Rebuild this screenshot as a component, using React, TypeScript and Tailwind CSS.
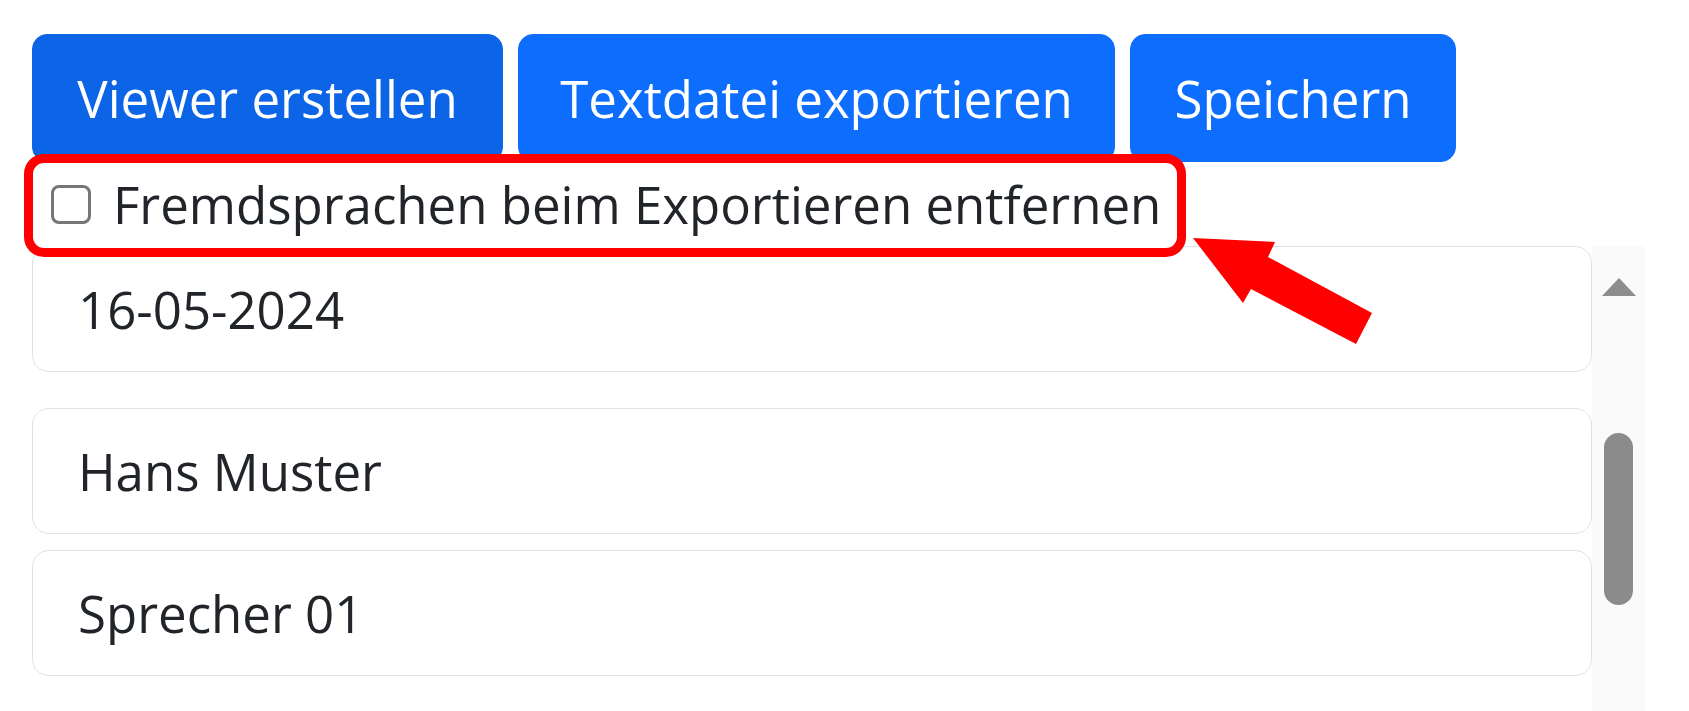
export default function App() {
  const fields = [
    { value: '16-05-2024', gap: 'mb-[36px]' },
    { value: 'Hans Muster', gap: 'mb-[16px]' },
    { value: 'Sprecher 01', gap: 'mb-[16px]' },
  ];

  return (
    <div
      className="relative w-[1689px] h-[711px] overflow-hidden bg-white pl-[32px] pt-[34px] text-[#212529]"
      style={{ fontFamily: '"Open Sans", "Noto Sans", sans-serif' }}
    >
      {/* Toolbar */}
      <div className="flex gap-[15px]">
        <button className="w-[471px] h-[128px] rounded-[15px] border border-[#0c64e6] bg-[#0c64e6] text-white text-[51px] leading-none flex items-center justify-center">
          Viewer erstellen
        </button>
        <button className="w-[597px] h-[128px] rounded-[15px] border border-[#0d6efd] bg-[#0d6efd] text-white text-[51px] leading-none flex items-center justify-center">
          Textdatei exportieren
        </button>
        <button className="w-[326px] h-[128px] rounded-[15px] border border-[#0d6efd] bg-[#0d6efd] text-white text-[51px] leading-none flex items-center justify-center">
          Speichern
        </button>
      </div>

      {/* Option row with annotation frame */}
      <div className="relative h-[84px]">
        <div className="absolute left-[-8px] top-[-8px] w-[1162px] h-[103px] rounded-[20px] border-[9px] border-[#ff0000] bg-white z-10" />
        <label className="relative z-20 flex items-center h-full pl-[19px] gap-[22px] text-[51px] leading-[1.5]">
          <span className="w-[40px] h-[39px] rounded-[8px] border-[3px] border-[#767676] bg-white shrink-0" />
          <span>Fremdsprachen beim Exportieren entfernen</span>
        </label>
      </div>

      {/* Scroll area */}
      <div className="flex h-[465px]">
        <div className="w-[1560px] overflow-hidden">
          {fields.map((f) => (
            <div
              key={f.value}
              className={`h-[126px] rounded-[17px] border border-[#dee2e6] flex items-center pl-[45px] text-[51px] leading-[1.5] ${f.gap}`}
            >
              {f.value}
            </div>
          ))}
        </div>
        <div className="w-[53px] bg-[#fafafa] flex flex-col items-center">
          <svg width="36" height="20" viewBox="0 0 36 20" className="mt-[31px] ml-[1px]">
            <polygon points="18,1 35,19 1,19" fill="#8d8d8d" />
          </svg>
          <div className="mt-[136px] w-[29px] h-[172px] rounded-full bg-[#8b8b8b]" />
        </div>
      </div>

      {/* Annotation arrow */}
      <svg
        className="absolute left-[1180px] top-[230px] z-30 pointer-events-none"
        width="200"
        height="120"
        viewBox="0 0 200 120"
      >
        <polygon points="13,8 95,12 88,27 192,83 176,114 71,59 63,73" fill="#ff0000" />
      </svg>
    </div>
  );
}
